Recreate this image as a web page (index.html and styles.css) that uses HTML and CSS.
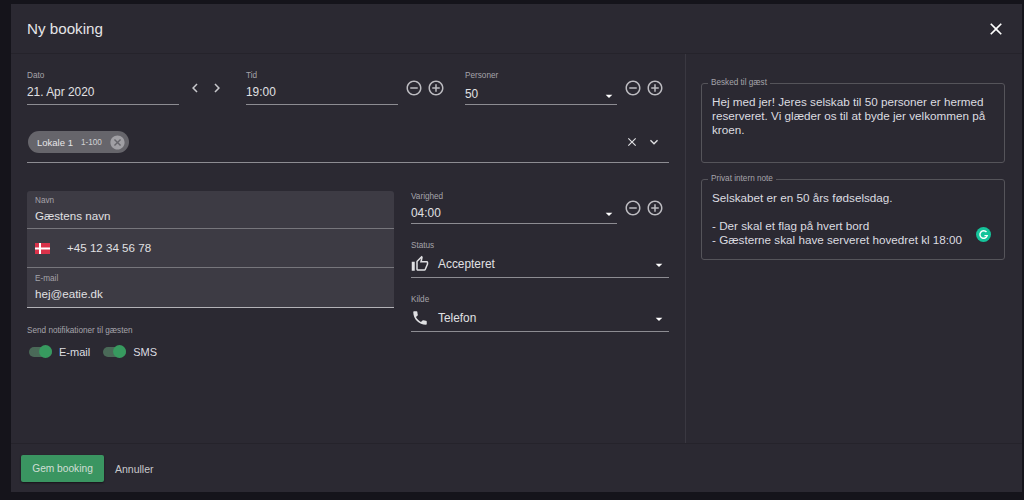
FILE: index.html
```html
<!DOCTYPE html>
<html lang="da">
<head>
<meta charset="UTF-8" />
<title>Ny booking</title>
<link rel="stylesheet" href="styles.css">
</head>
<body>
<svg class="sprite" width="0" height="0">
  <symbol id="i-minus" viewBox="0 0 24 24"><path d="M7 11v2h10v-2H7zm5-9C6.48 2 2 6.48 2 12s4.48 10 10 10 10-4.48 10-10S17.52 2 12 2zm0 18c-4.41 0-8-3.59-8-8s3.59-8 8-8 8 3.59 8 8-3.59 8-8 8z"/></symbol>
  <symbol id="i-plus" viewBox="0 0 24 24"><path d="M13 7h-2v4H7v2h4v4h2v-4h4v-2h-4V7zm-1-5C6.48 2 2 6.48 2 12s4.48 10 10 10 10-4.48 10-10S17.52 2 12 2zm0 18c-4.41 0-8-3.59-8-8s3.59-8 8-8 8 3.59 8 8-3.59 8-8 8z"/></symbol>
  <symbol id="i-close" viewBox="0 0 24 24"><path d="M19 6.41L17.59 5 12 10.59 6.41 5 5 6.41 10.59 12 5 17.59 6.41 19 12 13.41 17.59 19 19 17.59 13.41 12z"/></symbol>
  <symbol id="i-drop" viewBox="0 0 24 24"><path d="M7 10l5 5 5-5z"/></symbol>
  <symbol id="i-more" viewBox="0 0 24 24"><path d="M16.59 8.59L12 13.17 7.41 8.59 6 10l6 6 6-6z"/></symbol>
  <symbol id="i-left" viewBox="0 0 24 24"><path d="M15.41 7.41L14 6l-6 6 6 6 1.41-1.41L10.83 12z"/></symbol>
  <symbol id="i-right" viewBox="0 0 24 24"><path d="M10 6L8.59 7.41 13.17 12l-4.58 4.59L10 18l6-6z"/></symbol>
  <symbol id="i-cancel" viewBox="0 0 24 24"><path d="M12 2C6.47 2 2 6.47 2 12s4.47 10 10 10 10-4.47 10-10S17.53 2 12 2zm5 13.59L15.59 17 12 13.41 8.41 17 7 15.59 10.59 12 7 8.41 8.41 7 12 10.59 15.59 7 17 8.41 13.41 12 17 15.59z"/></symbol>
  <symbol id="i-thumb" viewBox="0 0 24 24"><path d="M9 21h9c.83 0 1.54-.5 1.84-1.22l3.02-7.05c.09-.23.14-.47.14-.73v-2c0-1.1-.9-2-2-2h-6.31l.95-4.57.03-.32c0-.41-.17-.79-.44-1.06L14.17 1 7.58 7.59C7.22 7.95 7 8.45 7 9v10c0 1.1.9 2 2 2zM9 9l4.34-4.34L12 10h9v2l-3 7H9V9zM1 9h4v12H1z"/></symbol>
  <symbol id="i-phone" viewBox="0 0 24 24"><path d="M6.62 10.79c1.44 2.83 3.76 5.14 6.59 6.59l2.2-2.2c.27-.27.67-.36 1.02-.24 1.12.37 2.33.57 3.57.57.55 0 1 .45 1 1V20c0 .55-.45 1-1 1-9.39 0-17-7.61-17-17 0-.55.45-1 1-1h3.5c.55 0 1 .45 1 1 0 1.25.2 2.45.57 3.57.11.35.03.74-.25 1.02l-2.2 2.2z"/></symbol>
</svg>

<div class="dialog">

  <header class="dialog-head">
    <h1>Ny booking</h1>
    <svg class="ico close-ico"><use href="#i-close"/></svg>
  </header>

  <div class="dialog-body">

    <!-- venstre side -->
    <section class="pane-left">

      <div class="top-row">
        <div class="top-group">
          <div class="field">
            <span class="lbl">Dato</span>
            <span class="val">21. Apr 2020</span>
          </div>
          <div class="steppers">
            <svg class="ico chev"><use href="#i-left"/></svg>
            <svg class="ico chev"><use href="#i-right"/></svg>
          </div>
        </div>
        <div class="top-group">
          <div class="field">
            <span class="lbl">Tid</span>
            <span class="val">19:00</span>
          </div>
          <div class="steppers">
            <svg class="ico step"><use href="#i-minus"/></svg>
            <svg class="ico step"><use href="#i-plus"/></svg>
          </div>
        </div>
        <div class="top-group">
          <div class="field">
            <span class="lbl">Personer</span>
            <span class="val val-select">50 <svg class="ico drop drop-low"><use href="#i-drop"/></svg></span>
          </div>
          <div class="steppers">
            <svg class="ico step"><use href="#i-minus"/></svg>
            <svg class="ico step"><use href="#i-plus"/></svg>
          </div>
        </div>
      </div>

      <div class="room-row">
        <span class="chip">
          <span class="chip-name">Lokale 1</span>
          <span class="chip-range">1-100</span>
          <svg class="ico chip-x"><use href="#i-cancel"/></svg>
        </span>
        <span class="room-actions">
          <svg class="ico small"><use href="#i-close"/></svg>
          <svg class="ico more"><use href="#i-more"/></svg>
        </span>
      </div>

      <div class="guest-grid">
        <div class="guest-col">
          <div class="filled">
            <div class="fill-field">
              <span class="lbl">Navn</span>
              <span class="val">Gæstens navn</span>
            </div>
            <div class="fill-field fill-phone">
              <svg class="flag" viewBox="0 0 15 11"><rect width="15" height="11" fill="#d9324a"/><rect x="4" width="2" height="11" fill="#fff"/><rect y="4.5" width="15" height="2" fill="#fff"/></svg>
              <span class="val">+45 12 34 56 78</span>
            </div>
            <div class="fill-field fill-last">
              <span class="lbl">E-mail</span>
              <span class="val">hej@eatie.dk</span>
            </div>
          </div>

          <p class="notify-lbl">Send notifikationer til gæsten</p>
          <div class="toggles">
            <span class="toggle"><span class="track"><span class="knob"></span></span>E-mail</span>
            <span class="toggle"><span class="track"><span class="knob"></span></span>SMS</span>
          </div>
        </div>

        <div class="side-col">
          <div class="side-row">
            <div class="field">
              <span class="lbl">Varighed</span>
              <span class="val val-select">04:00 <svg class="ico drop"><use href="#i-drop"/></svg></span>
            </div>
            <div class="steppers">
              <svg class="ico step"><use href="#i-minus"/></svg>
              <svg class="ico step"><use href="#i-plus"/></svg>
            </div>
          </div>
          <div class="field field-icon field-status">
            <span class="lbl">Status</span>
            <span class="val val-select"><svg class="ico lead"><use href="#i-thumb"/></svg><span class="grow">Accepteret</span><svg class="ico drop"><use href="#i-drop"/></svg></span>
          </div>
          <div class="field field-icon field-source">
            <span class="lbl">Kilde</span>
            <span class="val val-select"><svg class="ico lead"><use href="#i-phone"/></svg><span class="grow">Telefon</span><svg class="ico drop"><use href="#i-drop"/></svg></span>
          </div>
        </div>
      </div>

    </section>

    <!-- højre side -->
    <aside class="pane-right">
      <fieldset class="note note-first">
        <legend>Besked til gæst</legend>
        <p>Hej med jer! Jeres selskab til 50 personer er hermed reserveret. Vi glæder os til at byde jer velkommen på kroen.</p>
      </fieldset>
      <fieldset class="note">
        <legend>Privat intern note</legend>
        <p>Selskabet er en 50 års fødselsdag.<br><br>- Der skal et flag på hvert bord<br>- Gæsterne skal have serveret hovedret kl 18:00</p>
        <svg class="grammarly" viewBox="0 0 16 16"><circle cx="8" cy="8" r="8" fill="#15c39a"/><path d="M11.2 5.4A4 4 0 1 0 12 9.2H9" fill="none" stroke="#fff" stroke-width="1.5"/></svg>
      </fieldset>
    </aside>

  </div>

  <footer class="dialog-foot">
    <button class="btn-save">Gem booking</button>
    <button class="btn-cancel">Annuller</button>
  </footer>

</div>
</body>
</html>
```

FILE: styles.css
```css
*{box-sizing:border-box}
html,body{height:100%}
body{margin:0;padding:4px 2px 8px 11px;background:#15141b;font-family:"Liberation Sans",Arial,sans-serif;color:#dcdce0;overflow:hidden}
.sprite{position:absolute}
.ico{display:block;fill:currentColor;flex:none}

.dialog{height:488px;background:#2b2932;display:flex;flex-direction:column}
.dialog-head{height:50px;flex:none;display:flex;align-items:center;justify-content:space-between;padding:0 16px;border-bottom:1px solid #25232b}
.dialog-head h1{margin:0;font-size:15.2px;font-weight:400;color:#e4e4e7}
.close-ico{width:20px;height:20px;color:#fff}

.dialog-body{flex:1;display:flex;min-height:0}
.pane-left{width:675px;flex:none;padding:16px 0 0 16px;border-right:1px solid #3a3841}
.pane-right{flex:1;padding:24px 17px 0 15px;display:flex;flex-direction:column;gap:11px}

.lbl{font-size:8.2px;line-height:11px;color:#a5a4aa;display:block}
.val{font-size:11.9px;line-height:16px;color:#e0e0e3;display:block}
.val-select{display:flex;align-items:center;justify-content:space-between}
.field{flex:1;min-width:0;border-bottom:1px solid #8d8c92;padding-bottom:5px}
.field .val{margin-top:3px}
.drop{width:16px;height:16px;color:#fff;margin:2px 0 0}
.drop-low{margin-top:4px}

.top-row{display:flex}
.top-group{width:219px;display:flex;align-items:flex-start}
.top-group .field{height:35px}
.steppers{width:67px;flex:none;display:flex;gap:4px;padding:9px 0 0 7px;color:#bcbbc0}
.step{width:18px;height:18px}
.chev{width:18px;height:18px;color:#c8c8cc}

.room-row{width:642px;height:35px;margin-top:23px;padding:3px 7px 0 1px;border-bottom:1px solid #8d8c92;display:flex;justify-content:space-between;align-items:flex-start}
.chip{height:22px;width:101px;border-radius:11px;background:#66656b;display:flex;align-items:center;padding:0 3px 0 9px;font-size:9.5px;color:#e6e6e8}
.chip-name{white-space:nowrap}
.chip-range{font-size:8.2px;margin-left:8px;color:#d0d0d3}
.chip-x{width:17px;height:17px;margin-left:auto;color:#a09fa4}
.room-actions{display:flex;align-items:center;gap:7px;padding-top:3px;color:#e0e0e3}
.small{width:14px;height:14px}
.more{width:16px;height:16px}

.guest-grid{display:flex;margin-top:28px}
.guest-col{width:367px;flex:none}
.filled{background:#3d3b44;border-radius:3px 3px 0 0}
.fill-field{height:38px;padding:4px 8px 0;border-bottom:1px solid #77767c}
.fill-field .val{margin-top:2px;font-size:11.6px}
.fill-phone{height:39px;display:flex;align-items:center;padding:0 8px;gap:17px}
.fill-phone .val{margin-top:0}
.fill-last{height:40px;border-bottom-color:#b3b2b7;padding-top:5px}
.flag{width:15px;height:11px;flex:none}

.notify-lbl{margin:17px 0 0;font-size:8.2px;line-height:11px;color:#a5a4aa}
.toggles{display:flex;gap:13px;margin-top:10px;padding-left:2px}
.toggle{display:flex;align-items:center;gap:7px;font-size:11px;color:#dcdce0}
.track{width:23px;height:10px;border-radius:5px;background:#37483f radial-gradient(#5f8f74 .6px,transparent .8px) 0 0/2px 2px;position:relative;display:block}
.knob{position:absolute;right:0;top:-2px;width:13px;height:13px;border-radius:50%;background:#379a5f}

.side-col{margin-left:17px;width:258px;flex:none}
.side-row{display:flex;align-items:flex-start}
.side-row .field{height:33px}
.side-row .field .val{margin-top:2px}
.side-row .steppers{width:52px;padding-top:8px}
.field-icon .grow{flex:1;margin-left:9px}
.field-icon .drop{margin-right:2px}
.lead{width:18px;height:18px}
.field-status{margin-top:16px;height:38px}
.field-source{margin-top:16px;height:38px}
.field-icon .val{margin-top:4px}

.note{position:relative;margin:0;height:86px;padding:0 10px;border:1px solid #55545a;border-radius:3px;min-width:0}
.note-first{height:85px}
.note legend{margin-left:-4px;padding:0 3px;font-size:8.2px;line-height:10px;color:#a5a4aa}
.note p{margin:7px 0 0;font-size:11.7px;line-height:14px;color:#dcdce0}
.grammarly{position:absolute;right:13px;top:43px;width:15px;height:15px}

.dialog-foot{height:49px;flex:none;display:flex;align-items:flex-start;gap:11px;padding:11px 0 0 10px;border-top:1px solid #25232b}
.btn-save{height:27px;width:83px;padding:0;border:0;border-radius:2px;background:#3a9561;color:#d0ded5;font:10.2px "Liberation Sans",Arial,sans-serif;box-shadow:0 1px 2px rgba(0,0,0,.5)}
.btn-cancel{height:27px;padding:0;border:0;background:none;color:#c8c8cc;font:10.5px "Liberation Sans",Arial,sans-serif}
```
